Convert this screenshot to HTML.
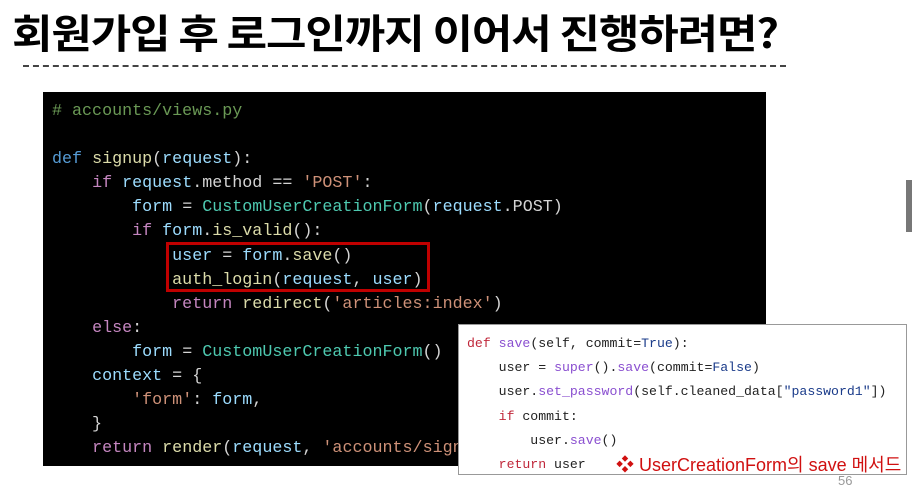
<!DOCTYPE html>
<html><head><meta charset="utf-8"><style>
body{margin:0;width:912px;height:487px;background:#fff;position:relative;overflow:hidden;font-family:"Liberation Sans","Noto Sans CJK KR",sans-serif}
.title{position:absolute;left:12px;top:2px;font-size:40px;font-weight:bold;white-space:nowrap;transform-origin:0 0;transform:scaleX(1.10);color:#000;letter-spacing:-1px;font-family:"Noto Sans CJK KR","Liberation Sans",sans-serif}
.dash{position:absolute;left:23px;top:65px;width:763px;border-top:2px dashed #444}
.code{position:absolute;left:43px;top:92px;width:723px;height:374px;background:#000}
.code pre{margin:0;position:absolute;left:9px;top:8px;font-family:"Liberation Mono",monospace;font-size:16.7px;line-height:24.1px;color:#d4d4d4}
.c{color:#6a9955}.k{color:#569cd6}.f{color:#dcdcaa}.v{color:#9cdcfe}.p{color:#c586c0}.s{color:#ce9178}.t{color:#4ec9b0}
.red{position:absolute;left:166px;top:242px;width:258px;height:44px;border:3px solid #c00000}
.box{position:absolute;left:458px;top:324px;width:447px;height:149px;background:#fff;border:1px solid #999}
.box pre{margin:0;position:absolute;left:8px;top:7px;font-family:"Liberation Mono",monospace;font-size:13.2px;line-height:24.2px;color:#222}
.r{color:#c0283b}.pu{color:#8a4fd0}.b{color:#1a3b8a}
.note{position:absolute;left:616px;top:451px;color:#d01010;font-size:18px;white-space:nowrap}
.num{position:absolute;left:838px;top:473px;color:#999;font-size:13px}
.bar{position:absolute;left:906px;top:180px;width:6px;height:52px;background:#777}
</style></head><body>
<div class="title">회원가입 후 로그인까지 이어서 진행하려면?</div>
<div class="dash"></div>
<div class="code"><pre><span class="c"># accounts/views.py</span>

<span class="k">def</span> <span class="f">signup</span>(<span class="v">request</span>):
    <span class="p">if</span> <span class="v">request</span>.method == <span class="s">'POST'</span>:
        <span class="v">form</span> = <span class="t">CustomUserCreationForm</span>(<span class="v">request</span>.POST)
        <span class="p">if</span> <span class="v">form</span>.<span class="f">is_valid</span>():
            <span class="v">user</span> = <span class="v">form</span>.<span class="f">save</span>()
            <span class="f">auth_login</span>(<span class="v">request</span>, <span class="v">user</span>)
            <span class="p">return</span> <span class="f">redirect</span>(<span class="s">'articles:index'</span>)
    <span class="p">else</span>:
        <span class="v">form</span> = <span class="t">CustomUserCreationForm</span>()
    <span class="v">context</span> = {
        <span class="s">'form'</span>: <span class="v">form</span>,
    }
    <span class="p">return</span> <span class="f">render</span>(<span class="v">request</span>, <span class="s">'accounts/signup.html'</span>, <span class="v">context</span>)</pre></div>
<div class="red"></div>
<div class="bar"></div>
<div class="box"><pre><span class="r">def</span> <span class="pu">save</span>(self, commit=<span class="b">True</span>):
    user = <span class="pu">super</span>().<span class="pu">save</span>(commit=<span class="b">False</span>)
    user.<span class="pu">set_password</span>(self.cleaned_data[<span class="b">"password1"</span>])
    <span class="r">if</span> commit:
        user.<span class="pu">save</span>()
    <span class="r">return</span> user</pre></div>
<div class="note">❖ UserCreationForm의 save 메서드</div>
<div class="num">56</div>
</body></html>
